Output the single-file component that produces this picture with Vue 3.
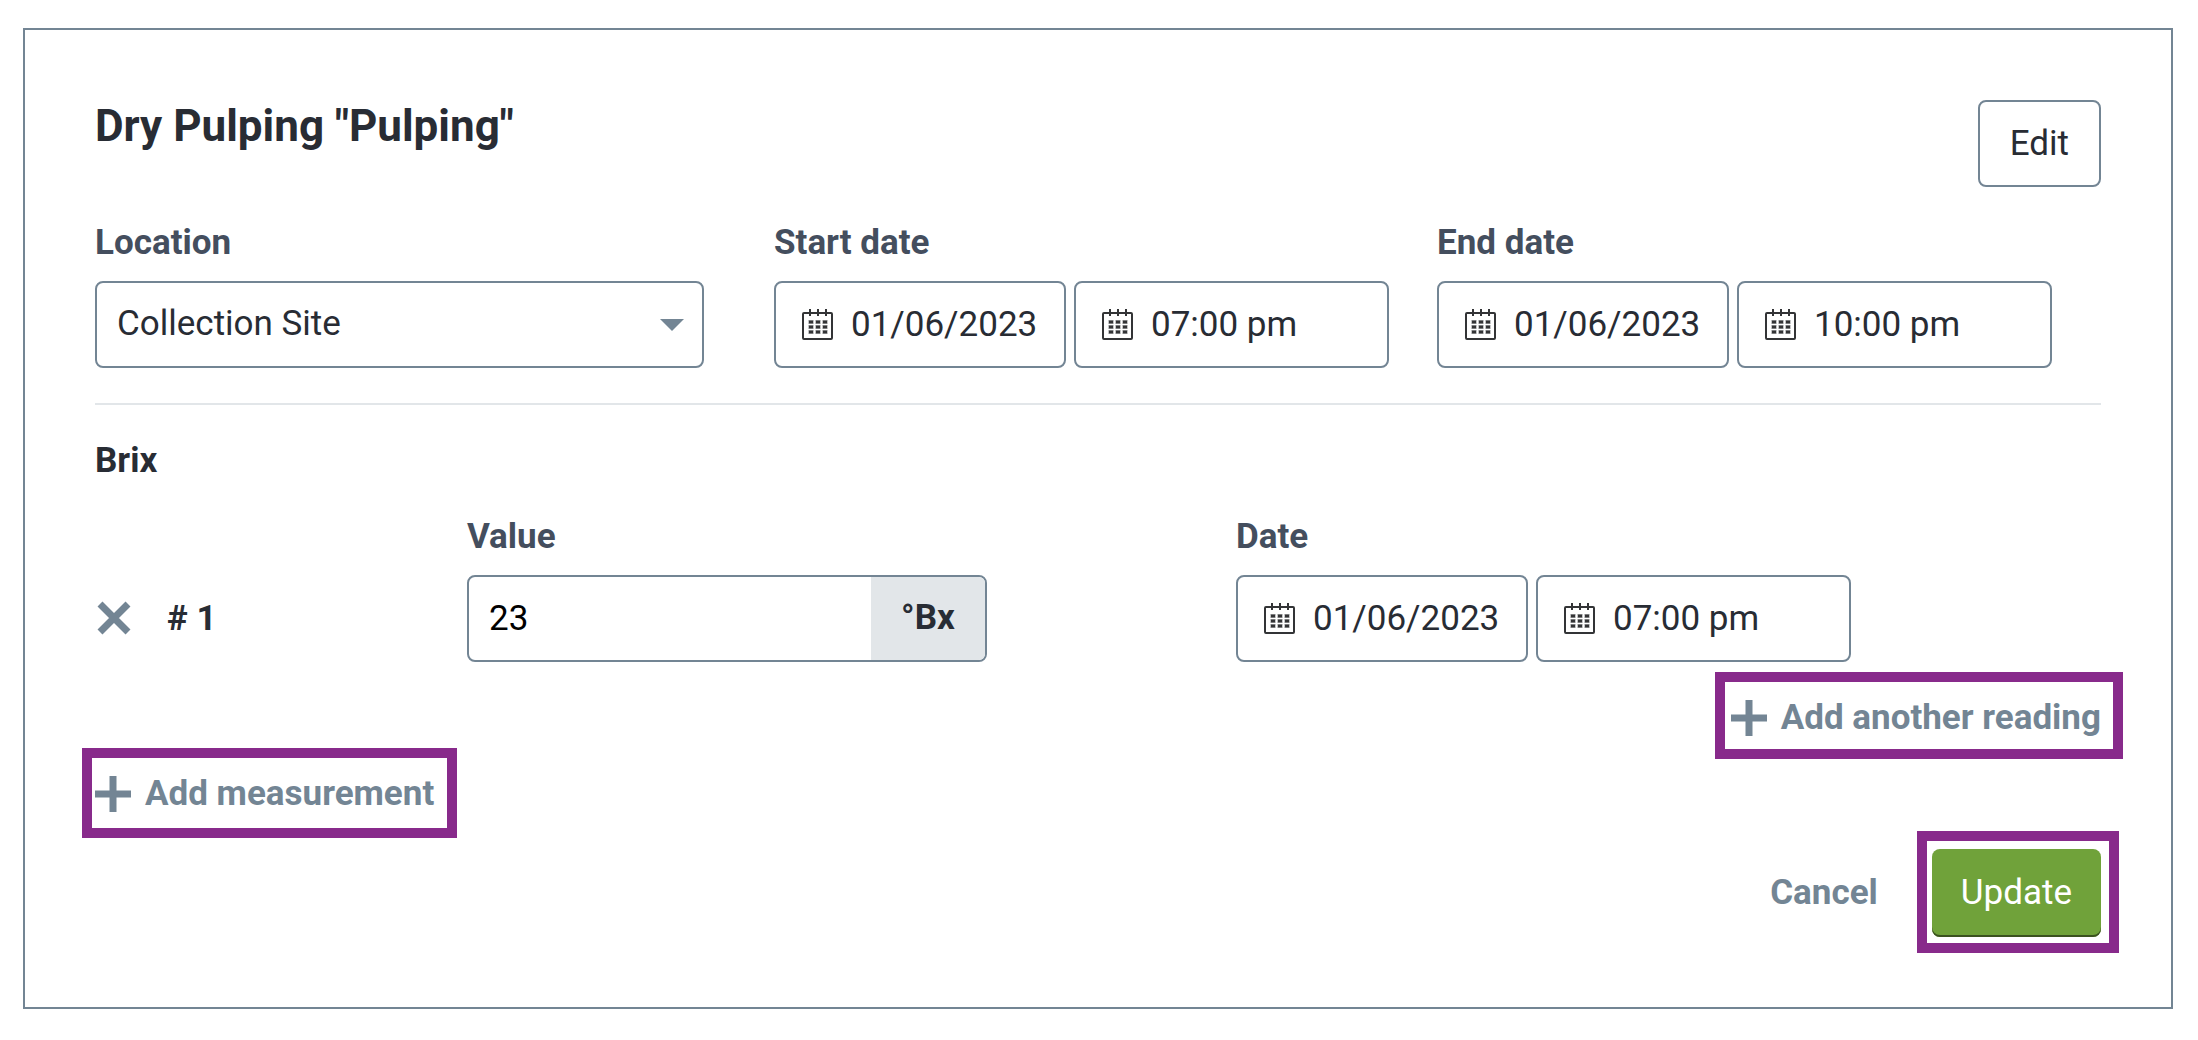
<script setup>
import { ref } from 'vue'

const location = ref('Collection Site')
const start = ref({ date: '01/06/2023', time: '07:00 pm' })
const end = ref({ date: '01/06/2023', time: '10:00 pm' })
const readings = ref([{ value: '23', date: '01/06/2023', time: '07:00 pm' }])
</script>

<template>
  <svg class="sprite" aria-hidden="true">
    <symbol id="calendar" viewBox="0 0 32 32">
      <rect x="1" y="4" width="29" height="26" rx="1" fill="none" stroke="#333436" stroke-width="2" />
      <path d="M8 0v7M16 0v7M24 0v7" stroke="#333436" stroke-width="2" />
      <path d="M6 13h20M6 18h20M6 23h20" stroke="#c4c5c6" stroke-width="4" stroke-dasharray="6 1" />
      <path d="M7 13h19M7 18h19M7 23h19" stroke="#333436" stroke-width="3" stroke-dasharray="4 3" />
    </symbol>
    <symbol id="plus" viewBox="0 0 36 36">
      <path d="M18 0v36M0 18h36" stroke="currentColor" stroke-width="7" />
    </symbol>
  </svg>

  <main class="card">
    <header class="head">
      <h1>Dry Pulping "Pulping"</h1>
      <button type="button" class="btn btn-outline">Edit</button>
    </header>

    <section class="process">
      <div class="field location">
        <label for="location">Location</label>
        <div class="select">
          <select id="location" v-model="location">
            <option>Collection Site</option>
          </select>
          <svg viewBox="0 0 24 12" aria-hidden="true"><path d="M0 0h24L12 12z" fill="currentColor" /></svg>
        </div>
      </div>
      <div class="field">
        <label for="start-date">Start date</label>
        <div class="datetime">
          <div class="box date">
            <svg class="cal" aria-hidden="true"><use href="#calendar" /></svg>
            <input id="start-date" v-model="start.date" type="text" />
          </div>
          <div class="box time">
            <svg class="cal" aria-hidden="true"><use href="#calendar" /></svg>
            <input v-model="start.time" type="text" aria-label="Start time" />
          </div>
        </div>
      </div>
      <div class="field">
        <label for="end-date">End date</label>
        <div class="datetime">
          <div class="box date">
            <svg class="cal" aria-hidden="true"><use href="#calendar" /></svg>
            <input id="end-date" v-model="end.date" type="text" />
          </div>
          <div class="box time">
            <svg class="cal" aria-hidden="true"><use href="#calendar" /></svg>
            <input v-model="end.time" type="text" aria-label="End time" />
          </div>
        </div>
      </div>
    </section>

    <hr />

    <section class="measurement">
      <h2>Brix</h2>
      <div v-for="(reading, i) in readings" :key="i" class="reading">
        <div class="index">
          <button type="button" class="remove" aria-label="Remove reading">
            <svg viewBox="0 0 34 34"><path d="M3 3l28 28M31 3L3 31" stroke="currentColor" stroke-width="7" /></svg>
          </button>
          <span># {{ i + 1 }}</span>
        </div>
        <div class="field value">
          <label :for="`value-${i}`">Value</label>
          <div class="box amount">
            <input :id="`value-${i}`" v-model="reading.value" type="text" />
            <span class="unit">°Bx</span>
          </div>
        </div>
        <div class="field">
          <label :for="`date-${i}`">Date</label>
          <div class="datetime">
            <div class="box date">
              <svg class="cal" aria-hidden="true"><use href="#calendar" /></svg>
              <input :id="`date-${i}`" v-model="reading.date" type="text" />
            </div>
            <div class="box time">
              <svg class="cal" aria-hidden="true"><use href="#calendar" /></svg>
              <input v-model="reading.time" type="text" aria-label="Reading time" />
            </div>
          </div>
        </div>
      </div>
    </section>

    <button type="button" class="link add-reading marked">
      <svg aria-hidden="true"><use href="#plus" /></svg>Add another reading
    </button>

    <button type="button" class="link add-measurement marked">
      <svg aria-hidden="true"><use href="#plus" /></svg>Add measurement
    </button>

    <footer class="actions">
      <button type="button" class="link">Cancel</button>
      <div class="submit marked">
        <button type="button" class="btn btn-primary">Update</button>
      </div>
    </footer>
  </main>
</template>

<style>
body {
  background: #fff;
}
</style>

<style scoped>
* {
  box-sizing: border-box;
}

.sprite {
  position: absolute;
  width: 0;
  height: 0;
}

.card {
  display: flex;
  flex-direction: column;
  margin: 28px 25px 31px 23px;
  padding: 70px;
  border: 2px solid #738594;
  font-family: Roboto, sans-serif;
  font-size: 35px;
  line-height: 42px;
  color: #282c34;
}

button,
input,
select {
  margin: 0;
  padding: 0;
  border: 0;
  background: none;
  font: inherit;
  color: inherit;
}

button {
  cursor: pointer;
}

h1,
h2 {
  margin: 0;
  font-weight: 700;
}

h1 {
  font-size: 44px;
  line-height: 52px;
}

h2 {
  font-size: 35px;
  line-height: 42px;
}

.head {
  display: flex;
  justify-content: space-between;
  align-items: flex-start;
}

.btn {
  height: 87px;
  padding: 0 30px;
  border-radius: 8px;
}

.btn-outline {
  border: 2px solid #738594;
}

.btn-primary {
  height: 88px;
  padding: 0 29px;
  background: #70a23a;
  box-shadow: inset 0 -2px #3b5220;
  color: #fff;
}

.process {
  display: grid;
  grid-template-columns: 679fr 663fr 664fr;
  margin-top: 35px;
}

.location {
  padding-right: 70px;
}

.field {
  display: flex;
  flex-direction: column;
  gap: 17px;
}

.field label {
  font-weight: 700;
  color: #444e5e;
}

.select {
  display: grid;
  align-items: center;
  color: #738594;
}

.select select {
  grid-area: 1 / 1;
  appearance: none;
  width: 100%;
  height: 87px;
  padding: 0 60px 2px 20px;
  border: 2px solid #738594;
  border-radius: 8px;
  color: #282c34;
}

.select svg {
  grid-area: 1 / 1;
  justify-self: end;
  width: 24px;
  height: 12px;
  margin-right: 20px;
  pointer-events: none;
}

.box {
  display: flex;
  align-items: center;
  height: 87px;
  border: 2px solid #738594;
  border-radius: 8px;
  overflow: hidden;
}

.box input {
  flex: 1;
  min-width: 0;
  height: 100%;
  outline: 0;
}

.datetime {
  display: flex;
  gap: 8px;
}

.date,
.time {
  padding-left: 26px;
  gap: 17px;
}

.date {
  width: 292px;
}

.time {
  width: 315px;
}

.cal {
  flex: none;
  width: 32px;
  height: 32px;
}

hr {
  width: 100%;
  height: 2px;
  margin: 35px 0;
  border: 0;
  background: #e2e6e9;
}

.measurement {
  display: flex;
  flex-direction: column;
  gap: 34px;
}

.reading {
  display: grid;
  grid-template-columns: 372fr 769fr 865fr;
  align-items: end;
}

.index {
  display: flex;
  align-items: center;
  gap: 36px;
  height: 87px;
  font-weight: 700;
}

.remove {
  display: flex;
  padding: 0 0 2px 2px;
  color: #738594;
}

.remove svg {
  width: 34px;
  height: 34px;
}

.value {
  max-width: 520px;
}

.amount input {
  padding-left: 20px;
  color: #000;
}

.unit {
  display: grid;
  place-items: center;
  align-self: stretch;
  width: 114px;
  padding-bottom: 2px;
  background: #e2e6e9;
  font-weight: 700;
}

.link {
  display: flex;
  align-items: center;
  gap: 14px;
  font-weight: 700;
  color: #738594;
}

.link svg {
  width: 36px;
  height: 36px;
}

.add-reading {
  align-self: flex-end;
  margin-top: 35px;
}

.add-measurement {
  align-self: flex-start;
  margin-top: 34px;
}

.actions {
  display: flex;
  justify-content: flex-end;
  align-items: center;
  gap: 54px;
  margin-top: 34px;
}

.submit {
  display: flex;
}

/* Highlight frames drawn around the actions called out to the reader */
.marked {
  position: relative;
}

.marked::after {
  content: '';
  position: absolute;
  border: 10px solid #882a8b;
  pointer-events: none;
}

.add-reading::after {
  inset: -25px -22px -20px -16px;
}

.add-measurement::after {
  inset: -25px -23px -23px -13px;
}

.submit::after {
  inset: -18px -18px -16px -15px;
}
</style>
